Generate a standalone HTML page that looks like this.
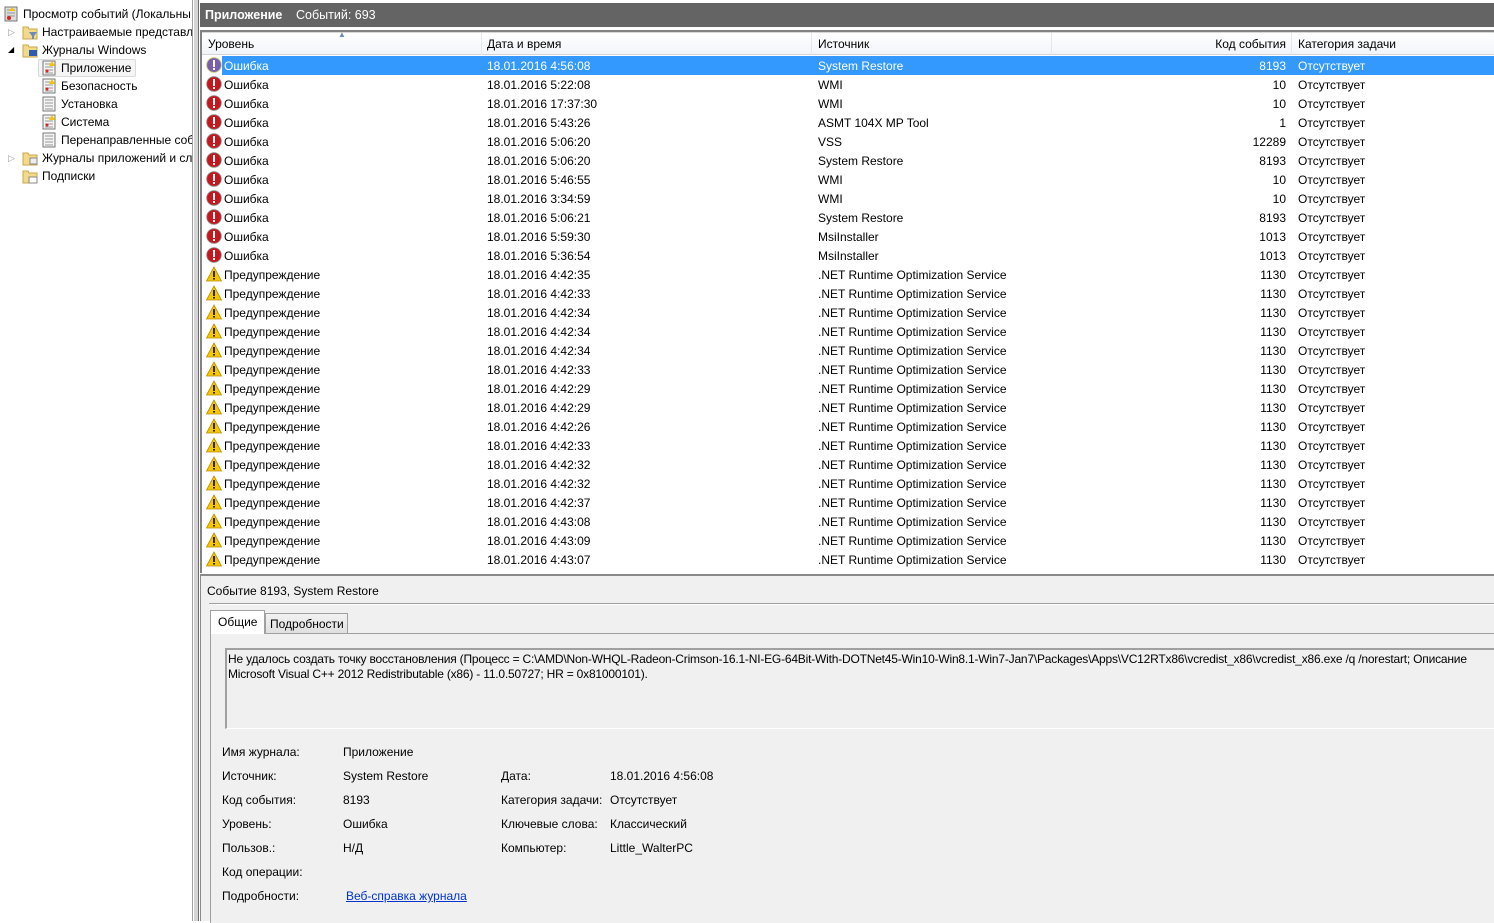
<!DOCTYPE html>
<html><head><meta charset="utf-8"><style>
*{margin:0;padding:0;box-sizing:border-box}
body{width:1494px;height:921px;overflow:hidden;background:#fff;font-family:"Liberation Sans","DejaVu Sans",sans-serif;font-size:12px;color:#000;position:relative}
.a{position:absolute;white-space:nowrap}
#left{left:0;top:0;width:193px;height:921px;background:#fff;border-right:1px solid #a0a0a0;overflow:hidden}
.ti{position:absolute;height:18px;line-height:18px;white-space:nowrap}
.ic{position:absolute;width:16px;height:16px}
#split{left:194px;top:0;width:5px;height:921px;background:#d4d4d4;border-right:1px solid #6d6d6d}
#hdr{left:200px;top:3px;width:1294px;height:24px;background:#646464;color:#fff;line-height:24px;font-size:12.5px}
#colh{left:202px;top:32px;width:1292px;height:23px;background:linear-gradient(#fff,#f1f5fa);border-bottom:1px solid #d5d5d5;border-top:1px solid #d8d8d8}
.row{position:absolute;left:202px;width:1292px;height:19px;line-height:19px}
.row span{position:absolute;white-space:nowrap}
.sel .t{background:#3399ff;color:#fff}
.c1{left:22px}.c2{left:285px}.c3{left:616px}.c4{right:208px;text-align:right}.c5{left:1096px}
.sep{position:absolute;top:0;width:1px;height:22px;background:#e3e8ee}
#list{left:200px;top:30px;width:1294px;height:543px;border-left:2px solid #828282;border-top:2px solid #828282}
#det{left:200px;top:574px;width:1294px;height:347px;background:#f0f0f0;border-top:2px solid #8a8a8a;border-left:1px solid #8a8a8a}
.lbl{position:absolute;white-space:nowrap}
</style></head><body>
<div id="left" class="a">
 <svg class="ic" style="left:3px;top:6px" viewBox="0 0 16 16"><rect x="2" y="1" width="12" height="14" fill="#dcdcdc" stroke="#777"/><path d="M4 4h8M4 7h8M4 10h8" stroke="#999"/><path d="M6 5l3-4 3 4z" fill="#f5c400"/><circle cx="6" cy="12" r="2" fill="#d22"/></svg>
 <div class="ti" style="left:23px;top:5px">Просмотр событий (Локальны</div>
 <div class="ti" style="left:8px;top:23px;color:#999;font-size:9px">▷</div>
 <svg class="ic" style="left:22px;top:24px" viewBox="0 0 16 16"><path d="M1 3h5l1 2h8v10H1z" fill="#f3d98a" stroke="#c9a74b"/><path d="M7 8h8l-3 4v3h-2v-3z" fill="#6a8db8"/></svg>
 <div class="ti" style="left:42px;top:23px">Настраиваемые представле</div>
 <div class="ti" style="left:8px;top:41px;font-size:8px">◢</div>
 <svg class="ic" style="left:22px;top:42px" viewBox="0 0 16 16"><path d="M1 3h5l1 2h8v10H1z" fill="#f3d98a" stroke="#c9a74b"/><rect x="7" y="8" width="8" height="6" fill="#2b5fae"/></svg>
 <div class="ti" style="left:42px;top:41px">Журналы Windows</div>
 <div class="a" style="left:38px;top:59px;width:98px;height:18px;border:1px solid #d9d9d9;background:#f5f5f5;border-radius:2px"></div>
 <svg class="ic" style="left:41px;top:60px" viewBox="0 0 16 16"><rect x="2" y="1" width="12" height="14" fill="#f4f4f4" stroke="#777"/><path d="M4 4h8M4 7h8M4 10h8M4 13h8" stroke="#999"/><path d="M8 6l3-5 3 5z" fill="#f5c400"/><circle cx="6" cy="11" r="1.5" fill="#d22"/></svg>
 <div class="ti" style="left:61px;top:59px">Приложение</div>
 <svg class="ic" style="left:41px;top:78px" viewBox="0 0 16 16"><rect x="2" y="1" width="12" height="14" fill="#f4f4f4" stroke="#777"/><path d="M4 4h8M4 7h8M4 10h8M4 13h8" stroke="#999"/><path d="M8 6l3-5 3 5z" fill="#f5c400"/><circle cx="6" cy="11" r="1.5" fill="#d22"/></svg>
 <div class="ti" style="left:61px;top:77px">Безопасность</div>
 <svg class="ic" style="left:41px;top:96px" viewBox="0 0 16 16"><rect x="2" y="1" width="12" height="14" fill="#f4f4f4" stroke="#777"/><path d="M4 4h8M4 7h8M4 10h8M4 13h8" stroke="#999"/></svg>
 <div class="ti" style="left:61px;top:95px">Установка</div>
 <svg class="ic" style="left:41px;top:114px" viewBox="0 0 16 16"><rect x="2" y="1" width="12" height="14" fill="#f4f4f4" stroke="#777"/><path d="M4 4h8M4 7h8M4 10h8M4 13h8" stroke="#999"/><path d="M8 6l3-5 3 5z" fill="#f5c400"/><circle cx="6" cy="11" r="1.5" fill="#d22"/></svg>
 <div class="ti" style="left:61px;top:113px">Система</div>
 <svg class="ic" style="left:41px;top:132px" viewBox="0 0 16 16"><rect x="2" y="1" width="12" height="14" fill="#f4f4f4" stroke="#777"/><path d="M4 4h8M4 7h8M4 10h8M4 13h8" stroke="#999"/></svg>
 <div class="ti" style="left:61px;top:131px">Перенаправленные соб</div>
 <div class="ti" style="left:8px;top:149px;color:#999;font-size:9px">▷</div>
 <svg class="ic" style="left:22px;top:150px" viewBox="0 0 16 16"><path d="M1 3h5l1 2h8v10H1z" fill="#f3d98a" stroke="#c9a74b"/><rect x="8" y="8" width="7" height="6" fill="#eee" stroke="#888"/></svg>
 <div class="ti" style="left:42px;top:149px">Журналы приложений и сл</div>
 <svg class="ic" style="left:22px;top:168px" viewBox="0 0 16 16"><path d="M1 3h5l1 2h8v10H1z" fill="#f3d98a" stroke="#c9a74b"/><rect x="7" y="9" width="8" height="6" fill="#fff" stroke="#888"/></svg>
 <div class="ti" style="left:42px;top:167px">Подписки</div>
</div>
<div id="split" class="a"></div>
<div id="hdr" class="a"><b style="position:absolute;left:5px">Приложение</b><span style="position:absolute;left:96px">Событий: 693</span></div>
<div id="list" class="a"></div>
<div id="colh" class="a">
 <span class="a" style="left:6px;top:4px">Уровень</span>
 <span class="a" style="left:136px;top:-3px;font-size:8px;color:#6b8bb0">▲</span>
 <div class="sep" style="left:279px"></div>
 <span class="a" style="left:285px;top:4px">Дата и время</span>
 <div class="sep" style="left:609px"></div>
 <span class="a" style="left:616px;top:4px">Источник</span>
 <div class="sep" style="left:849px"></div>
 <span class="a" style="right:208px;top:4px">Код события</span>
 <div class="sep" style="left:1089px"></div>
 <span class="a" style="left:1096px;top:4px">Категория задачи</span>
</div>
<svg width="0" height="0" style="position:absolute"><defs>
<symbol id="er" viewBox="0 0 16 16"><circle cx="8" cy="8" r="7.3" fill="#c8161d" stroke="#888" stroke-width="0.8"/><rect x="7" y="3" width="2" height="7" fill="#fff"/><rect x="7" y="11" width="2" height="2" fill="#fff"/></symbol>
<symbol id="ers" viewBox="0 0 16 16"><circle cx="8" cy="8" r="7.3" fill="#7a5fae" stroke="#c6c96a" stroke-width="0.8"/><rect x="7" y="3" width="2" height="7" fill="#fff"/><rect x="7" y="11" width="2" height="2" fill="#fff"/></symbol>
<symbol id="wr" viewBox="0 0 16 16"><path d="M8 1L15.5 15H0.5z" fill="#f7c800" stroke="#b88c00" stroke-width="0.8"/><rect x="7.2" y="5" width="1.6" height="6" fill="#000"/><rect x="7.2" y="12" width="1.6" height="1.6" fill="#000"/></symbol>
</defs></svg>
<div class="row sel" style="top:56px"><svg style="position:absolute;left:4px;top:1px" width="16" height="16"><use href="#ers"/></svg><span class="t" style="left:20px;right:0;height:19px"></span><span class="c1" style="color:#fff;top:1px">Ошибка</span><span class="c2" style="color:#fff;top:1px">18.01.2016 4:56:08</span><span class="c3" style="color:#fff;top:1px">System Restore</span><span class="c4" style="color:#fff;top:1px">8193</span><span class="c5" style="color:#fff;top:1px">Отсутствует</span></div>
<div class="row" style="top:76px"><svg style="position:absolute;left:4px;top:0px" width="16" height="16"><use href="#er"/></svg><span class="c1">Ошибка</span><span class="c2">18.01.2016 5:22:08</span><span class="c3">WMI</span><span class="c4">10</span><span class="c5">Отсутствует</span></div>
<div class="row" style="top:95px"><svg style="position:absolute;left:4px;top:0px" width="16" height="16"><use href="#er"/></svg><span class="c1">Ошибка</span><span class="c2">18.01.2016 17:37:30</span><span class="c3">WMI</span><span class="c4">10</span><span class="c5">Отсутствует</span></div>
<div class="row" style="top:114px"><svg style="position:absolute;left:4px;top:0px" width="16" height="16"><use href="#er"/></svg><span class="c1">Ошибка</span><span class="c2">18.01.2016 5:43:26</span><span class="c3">ASMT 104X MP Tool</span><span class="c4">1</span><span class="c5">Отсутствует</span></div>
<div class="row" style="top:133px"><svg style="position:absolute;left:4px;top:0px" width="16" height="16"><use href="#er"/></svg><span class="c1">Ошибка</span><span class="c2">18.01.2016 5:06:20</span><span class="c3">VSS</span><span class="c4">12289</span><span class="c5">Отсутствует</span></div>
<div class="row" style="top:152px"><svg style="position:absolute;left:4px;top:0px" width="16" height="16"><use href="#er"/></svg><span class="c1">Ошибка</span><span class="c2">18.01.2016 5:06:20</span><span class="c3">System Restore</span><span class="c4">8193</span><span class="c5">Отсутствует</span></div>
<div class="row" style="top:171px"><svg style="position:absolute;left:4px;top:0px" width="16" height="16"><use href="#er"/></svg><span class="c1">Ошибка</span><span class="c2">18.01.2016 5:46:55</span><span class="c3">WMI</span><span class="c4">10</span><span class="c5">Отсутствует</span></div>
<div class="row" style="top:190px"><svg style="position:absolute;left:4px;top:0px" width="16" height="16"><use href="#er"/></svg><span class="c1">Ошибка</span><span class="c2">18.01.2016 3:34:59</span><span class="c3">WMI</span><span class="c4">10</span><span class="c5">Отсутствует</span></div>
<div class="row" style="top:209px"><svg style="position:absolute;left:4px;top:0px" width="16" height="16"><use href="#er"/></svg><span class="c1">Ошибка</span><span class="c2">18.01.2016 5:06:21</span><span class="c3">System Restore</span><span class="c4">8193</span><span class="c5">Отсутствует</span></div>
<div class="row" style="top:228px"><svg style="position:absolute;left:4px;top:0px" width="16" height="16"><use href="#er"/></svg><span class="c1">Ошибка</span><span class="c2">18.01.2016 5:59:30</span><span class="c3">MsiInstaller</span><span class="c4">1013</span><span class="c5">Отсутствует</span></div>
<div class="row" style="top:247px"><svg style="position:absolute;left:4px;top:0px" width="16" height="16"><use href="#er"/></svg><span class="c1">Ошибка</span><span class="c2">18.01.2016 5:36:54</span><span class="c3">MsiInstaller</span><span class="c4">1013</span><span class="c5">Отсутствует</span></div>
<div class="row" style="top:266px"><svg style="position:absolute;left:4px;top:0px" width="16" height="16"><use href="#wr"/></svg><span class="c1">Предупреждение</span><span class="c2">18.01.2016 4:42:35</span><span class="c3">.NET Runtime Optimization Service</span><span class="c4">1130</span><span class="c5">Отсутствует</span></div>
<div class="row" style="top:285px"><svg style="position:absolute;left:4px;top:0px" width="16" height="16"><use href="#wr"/></svg><span class="c1">Предупреждение</span><span class="c2">18.01.2016 4:42:33</span><span class="c3">.NET Runtime Optimization Service</span><span class="c4">1130</span><span class="c5">Отсутствует</span></div>
<div class="row" style="top:304px"><svg style="position:absolute;left:4px;top:0px" width="16" height="16"><use href="#wr"/></svg><span class="c1">Предупреждение</span><span class="c2">18.01.2016 4:42:34</span><span class="c3">.NET Runtime Optimization Service</span><span class="c4">1130</span><span class="c5">Отсутствует</span></div>
<div class="row" style="top:323px"><svg style="position:absolute;left:4px;top:0px" width="16" height="16"><use href="#wr"/></svg><span class="c1">Предупреждение</span><span class="c2">18.01.2016 4:42:34</span><span class="c3">.NET Runtime Optimization Service</span><span class="c4">1130</span><span class="c5">Отсутствует</span></div>
<div class="row" style="top:342px"><svg style="position:absolute;left:4px;top:0px" width="16" height="16"><use href="#wr"/></svg><span class="c1">Предупреждение</span><span class="c2">18.01.2016 4:42:34</span><span class="c3">.NET Runtime Optimization Service</span><span class="c4">1130</span><span class="c5">Отсутствует</span></div>
<div class="row" style="top:361px"><svg style="position:absolute;left:4px;top:0px" width="16" height="16"><use href="#wr"/></svg><span class="c1">Предупреждение</span><span class="c2">18.01.2016 4:42:33</span><span class="c3">.NET Runtime Optimization Service</span><span class="c4">1130</span><span class="c5">Отсутствует</span></div>
<div class="row" style="top:380px"><svg style="position:absolute;left:4px;top:0px" width="16" height="16"><use href="#wr"/></svg><span class="c1">Предупреждение</span><span class="c2">18.01.2016 4:42:29</span><span class="c3">.NET Runtime Optimization Service</span><span class="c4">1130</span><span class="c5">Отсутствует</span></div>
<div class="row" style="top:399px"><svg style="position:absolute;left:4px;top:0px" width="16" height="16"><use href="#wr"/></svg><span class="c1">Предупреждение</span><span class="c2">18.01.2016 4:42:29</span><span class="c3">.NET Runtime Optimization Service</span><span class="c4">1130</span><span class="c5">Отсутствует</span></div>
<div class="row" style="top:418px"><svg style="position:absolute;left:4px;top:0px" width="16" height="16"><use href="#wr"/></svg><span class="c1">Предупреждение</span><span class="c2">18.01.2016 4:42:26</span><span class="c3">.NET Runtime Optimization Service</span><span class="c4">1130</span><span class="c5">Отсутствует</span></div>
<div class="row" style="top:437px"><svg style="position:absolute;left:4px;top:0px" width="16" height="16"><use href="#wr"/></svg><span class="c1">Предупреждение</span><span class="c2">18.01.2016 4:42:33</span><span class="c3">.NET Runtime Optimization Service</span><span class="c4">1130</span><span class="c5">Отсутствует</span></div>
<div class="row" style="top:456px"><svg style="position:absolute;left:4px;top:0px" width="16" height="16"><use href="#wr"/></svg><span class="c1">Предупреждение</span><span class="c2">18.01.2016 4:42:32</span><span class="c3">.NET Runtime Optimization Service</span><span class="c4">1130</span><span class="c5">Отсутствует</span></div>
<div class="row" style="top:475px"><svg style="position:absolute;left:4px;top:0px" width="16" height="16"><use href="#wr"/></svg><span class="c1">Предупреждение</span><span class="c2">18.01.2016 4:42:32</span><span class="c3">.NET Runtime Optimization Service</span><span class="c4">1130</span><span class="c5">Отсутствует</span></div>
<div class="row" style="top:494px"><svg style="position:absolute;left:4px;top:0px" width="16" height="16"><use href="#wr"/></svg><span class="c1">Предупреждение</span><span class="c2">18.01.2016 4:42:37</span><span class="c3">.NET Runtime Optimization Service</span><span class="c4">1130</span><span class="c5">Отсутствует</span></div>
<div class="row" style="top:513px"><svg style="position:absolute;left:4px;top:0px" width="16" height="16"><use href="#wr"/></svg><span class="c1">Предупреждение</span><span class="c2">18.01.2016 4:43:08</span><span class="c3">.NET Runtime Optimization Service</span><span class="c4">1130</span><span class="c5">Отсутствует</span></div>
<div class="row" style="top:532px"><svg style="position:absolute;left:4px;top:0px" width="16" height="16"><use href="#wr"/></svg><span class="c1">Предупреждение</span><span class="c2">18.01.2016 4:43:09</span><span class="c3">.NET Runtime Optimization Service</span><span class="c4">1130</span><span class="c5">Отсутствует</span></div>
<div class="row" style="top:551px"><svg style="position:absolute;left:4px;top:0px" width="16" height="16"><use href="#wr"/></svg><span class="c1">Предупреждение</span><span class="c2">18.01.2016 4:43:07</span><span class="c3">.NET Runtime Optimization Service</span><span class="c4">1130</span><span class="c5">Отсутствует</span></div>
<div id="det" class="a">
 <div class="lbl" style="left:6px;top:8px">Событие 8193, System Restore</div>
 <div class="a" style="left:8px;top:27px;width:1290px;height:2px;border-top:1px solid #a0a0a0;border-bottom:1px solid #fff"></div>
 <div class="a" style="left:9px;top:57px;width:1290px;height:290px;border-left:1px solid #a0a0a0;border-top:1px solid #a0a0a0;background:#f0f0f0"></div>
 <div class="a" style="left:9px;top:34px;width:55px;height:24px;background:#fff;border:1px solid #a0a0a0;border-bottom:none"></div>
 <div class="lbl" style="left:17px;top:39px">Общие</div>
 <div class="a" style="left:64px;top:37px;width:83px;height:20px;background:linear-gradient(#f2f2f2,#e0e0e0);border:1px solid #a0a0a0;border-bottom:none"></div>
 <div class="lbl" style="left:69px;top:41px">Подробности</div>
 <div class="a" style="left:24px;top:72px;width:1280px;height:81px;border-top:2px solid #a0a0a0;border-left:2px solid #a0a0a0;border-bottom:1px solid #fff"></div>
 <div class="lbl" style="left:27px;top:76px;letter-spacing:-0.2px">Не удалось создать точку восстановления (Процесс = C:\AMD\Non-WHQL-Radeon-Crimson-16.1-NI-EG-64Bit-With-DOTNet45-Win10-Win8.1-Win7-Jan7\Packages\Apps\VC12RTx86\vcredist_x86\vcredist_x86.exe /q /norestart; Описание</div>
 <div class="lbl" style="left:27px;top:91px;letter-spacing:-0.2px">Microsoft Visual C++ 2012 Redistributable (x86) - 11.0.50727; HR = 0x81000101).</div>
 <div class="lbl" style="left:21px;top:169px">Имя журнала:</div><div class="lbl" style="left:142px;top:169px">Приложение</div>
 <div class="lbl" style="left:21px;top:193px">Источник:</div><div class="lbl" style="left:142px;top:193px">System Restore</div>
 <div class="lbl" style="left:300px;top:193px">Дата:</div><div class="lbl" style="left:409px;top:193px">18.01.2016 4:56:08</div>
 <div class="lbl" style="left:21px;top:217px">Код события:</div><div class="lbl" style="left:142px;top:217px">8193</div>
 <div class="lbl" style="left:300px;top:217px">Категория задачи:</div><div class="lbl" style="left:409px;top:217px">Отсутствует</div>
 <div class="lbl" style="left:21px;top:241px">Уровень:</div><div class="lbl" style="left:142px;top:241px">Ошибка</div>
 <div class="lbl" style="left:300px;top:241px">Ключевые слова:</div><div class="lbl" style="left:409px;top:241px">Классический</div>
 <div class="lbl" style="left:21px;top:265px">Пользов.:</div><div class="lbl" style="left:142px;top:265px">Н/Д</div>
 <div class="lbl" style="left:300px;top:265px">Компьютер:</div><div class="lbl" style="left:409px;top:265px">Little_WalterPC</div>
 <div class="lbl" style="left:21px;top:289px">Код операции:</div>
 <div class="lbl" style="left:21px;top:313px">Подробности:</div><div class="lbl" style="left:145px;top:313px;color:#0033cc;text-decoration:underline">Веб-справка журнала </div>
</div>
</body></html>
